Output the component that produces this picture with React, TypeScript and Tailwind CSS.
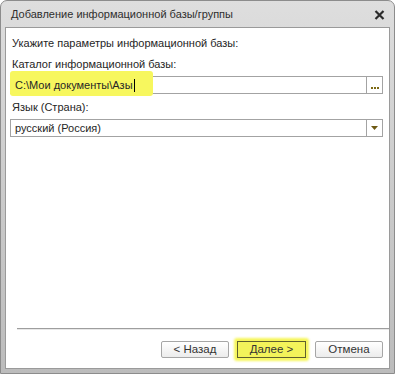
import React from "react";

const font = { fontFamily: '"Liberation Sans", Arial, sans-serif' };

function DialogButton({ label, primary }: { label: string; primary?: boolean }) {
  if (primary) {
    return (
      <div className="relative">
        <div className="absolute -inset-[3px] rounded-[3px] bg-[#f6f65c] blur-[1px]" />
        <button className="relative flex h-[17px] w-[69px] items-center justify-center border border-[#5f5f2e] bg-[#f3f35a] text-[11.5px] leading-none text-[#333]">
          {label}
        </button>
      </div>
    );
  }
  return (
    <button className="flex h-[17px] w-[68px] items-center justify-center rounded-[2px] border border-[#a6a6a6] bg-gradient-to-b from-white to-[#ececec] text-[11.5px] leading-none text-[#333]">
      {label}
    </button>
  );
}

export default function App() {
  return (
    <div className="h-[374px] w-[395px] bg-white" style={font}>
      <div className="flex h-full flex-col rounded-t-[7px] border border-[#8c8c8c] bg-gradient-to-b from-[#dedede] via-[#cbcbcb] to-[#bcbcbc] px-[4px] pb-[4px]">
        {/* title */}
        <div className="flex h-[26px] shrink-0 items-center justify-between pl-[6px] pr-[5px] pt-[1px]">
          <span className="text-[11px] text-[#2e2e2e]">Добавление информационной базы/группы</span>
          <svg width="11" height="10" viewBox="0 0 11 10">
            <path d="M1.5 1 L9.5 9 M9.5 1 L1.5 9" stroke="#2b2b2b" strokeWidth="2.2" />
          </svg>
        </div>

        {/* body */}
        <div className="flex flex-1 flex-col border border-[#9a9a9a] bg-white pl-[4px] pr-[6px] text-[11px] leading-[14px] text-[#262626]">
          <div className="pl-[2px] pt-[8px]">Укажите параметры информационной базы:</div>

          <div className="mt-[7px] pl-[2px]">Каталог информационной базы:</div>
          <div className="relative mt-[5px] flex h-[18px] border border-[#a3a3a3] bg-white">
            <div className="absolute -left-[1px] -top-[6px] h-[25px] w-[143px] rounded-[3px] bg-[#f7f75e] blur-[0.6px]" />
            <div className="relative flex flex-1 items-center pl-[4px]">
              <span>C:\Мои документы\Азы</span>
              <span className="ml-[1px] h-[13px] w-[1px] bg-black" />
            </div>
            <div className="relative flex w-[16px] items-end justify-center border-l border-[#a3a3a3] pb-[4px]">
              <div className="flex gap-[1px]">
                <span className="h-[2px] w-[2px] bg-[#7d6a14]" />
                <span className="h-[2px] w-[2px] bg-[#7d6a14]" />
                <span className="h-[2px] w-[2px] bg-[#7d6a14]" />
              </div>
            </div>
          </div>

          <div className="mt-[6px] pl-[2px]">Язык (Страна):</div>
          <div className="mt-[5px] flex h-[18px] border border-[#a3a3a3] bg-white">
            <div className="flex flex-1 items-center pl-[4px]">русский (Россия)</div>
            <div className="flex w-[16px] items-center justify-center border-l border-[#a3a3a3]">
              <svg width="7" height="4" viewBox="0 0 7 4">
                <path d="M0 0 H7 L3.5 4 Z" fill="#6e5a14" />
              </svg>
            </div>
          </div>

          <div className="flex-1" />

          <div className="ml-[7px] mr-[-6px] h-[2px] border-t border-[#9e9e9e] bg-[#e8e8e8]" />

          <div className="flex justify-end gap-[7px] pb-[10px] pt-[11px]">
            <DialogButton label="< Назад" />
            <div className="ml-[1px] mr-[2px]">
              <DialogButton label="Далее >" primary />
            </div>
            <DialogButton label="Отмена" />
          </div>
        </div>
      </div>
    </div>
  );
}
